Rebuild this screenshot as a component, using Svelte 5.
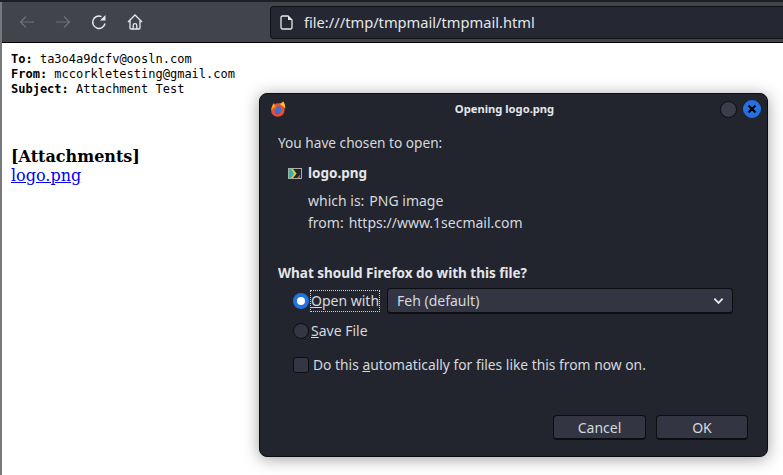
<script>
	let choice = 'open';
	let remember = false;
</script>

<div class="browser">
	<div class="topline"></div>
	<header class="toolbar">
		<div class="navs">
			<button class="nav" aria-label="Back">
				<svg viewBox="0 0 16 16" width="16" height="16"><path d="M15 8H1.500M7 2.500L1.500 8 7 13.500" fill="none" stroke="#6f7178" stroke-width="1.200"/></svg>
			</button>
			<button class="nav" aria-label="Forward">
				<svg viewBox="0 0 16 16" width="16" height="16"><path d="M1 8h13.500M9 2.500L14.500 8 9 13.500" fill="none" stroke="#6f7178" stroke-width="1.200"/></svg>
			</button>
			<button class="nav" aria-label="Reload">
				<svg viewBox="0 0 16 16" width="16" height="16"><path d="M14 9.500A6.200 6.200 0 1 1 10.500 2.600" fill="none" stroke="#e8e9eb" stroke-width="1.400"/><path d="M14.500 1v5.500H9z" fill="#e8e9eb"/></svg>
			</button>
			<button class="nav" aria-label="Home">
				<svg viewBox="0 0 16 16" width="16" height="16"><path d="M1 8l7-7 7 7M3 6v8a1 1 0 0 0 1 1h8a1 1 0 0 0 1-1V6M6.200 15v-3.500a1.800 1.800 0 0 1 3.600 0V15" fill="none" stroke="#e8e9eb" stroke-width="1.300"/></svg>
			</button>
		</div>
		<div class="urlbar">
			<svg viewBox="0 0 13 15" width="13" height="15"><path d="M2.500 1h5.500l4 4v7.500a1.500 1.500 0 0 1-1.500 1.500h-8A1.500 1.500 0 0 1 1 12.500v-10A1.500 1.500 0 0 1 2.500 1z" fill="none" stroke="#e8e9eb" stroke-width="1.300"/><path d="M8 1l4 4H8z" fill="#e8e9eb"/></svg>
			<span>file:///tmp/tmpmail/tmpmail.html</span>
		</div>
	</header>
	<main class="page">
		<pre class="headers"><b>To:</b> ta3o4a9dcfv@oosln.com
<b>From:</b> mccorkletesting@gmail.com
<b>Subject:</b> Attachment Test</pre>
		<div class="attachments">
			<b>[Attachments]</b><br />
			<a href="#logo">logo.png</a>
		</div>
	</main>
</div>

<div class="dialog">
	<div class="titlebar">
		<svg class="fx" viewBox="0 0 16 16" width="16" height="16">
			<circle cx="7.800" cy="9" r="6.800" fill="#ee4f2a"/>
			<path d="M8 2.200c1.500 1.500 5-1 5-2 1.500 1.500 2.600 4.500 2.200 8C14.500 6 11.500 3.500 8 2.200z" fill="#ffc233"/>
			<path d="M1.500 9C1.500 6 2.500 3.500 4 2c0 1.500.8 2.500 2 3z" fill="#ff9a1f"/>
			<path d="M7 5.500c4-1.500 6 4 3 6.500-2 1.200-5 .5-5.500-2z" fill="#3d6fd8"/>
			<path d="M4.500 10c1 2.500 4 3 6 1.800-2 2.500-6 2-6-1.800z" fill="#8a3fb8"/>
		</svg>
		<span class="title">Opening logo.png</span>
		<span class="wbtn"></span>
		<span class="wbtn close">
			<svg viewBox="0 0 10 10" width="10" height="10"><path d="M1.500 1.500l7 7M8.500 1.500l-7 7" stroke="#000" stroke-width="2.200"/></svg>
		</span>
	</div>

	<div class="body">
		<p class="chosen">You have chosen to open:</p>
		<div class="file">
			<svg viewBox="0 0 14 11" width="14" height="11">
				<rect width="14" height="11" fill="#a9adae"/>
				<rect x="1" y="1" width="12" height="9" fill="#20232a"/>
				<path d="M1 1h4l3.500 4.500L5 10H1z" fill="#2fb6b0"/>
				<path d="M3 1h2l3.500 4.500L5 10H3l3-4.500z" fill="#e6c22c"/>
				<path d="M9 10l3-3.500V10z" fill="#cf4a3c"/>
			</svg>
			<b>logo.png</b>
		</div>
		<div class="meta">
			<div class="metarow"><span>which is:</span><span>PNG image</span></div>
			<div class="metarow"><span>from:</span><span>https://www.1secmail.com</span></div>
		</div>

		<p class="question">What should Firefox do with this file?</p>
		<div class="choices">
			<div class="choice">
				<button class="radio" class:on={choice === 'open'} aria-label="Open with" onclick={() => (choice = 'open')}></button>
				<span class="focus"><u>O</u>pen with</span>
				<div class="select">
					<span>Feh (default)</span>
					<svg viewBox="0 0 12 8" width="11" height="8"><path d="M1.500 1.500L6 6l4.500-4.500" fill="none" stroke="#e8e9eb" stroke-width="2"/></svg>
				</div>
			</div>
			<div class="choice save">
				<button class="radio" class:on={choice === 'save'} aria-label="Save File" onclick={() => (choice = 'save')}></button>
				<span class="savelabel"><u>S</u>ave File</span>
			</div>
			<div class="choice auto">
				<button class="check" class:on={remember} aria-label="Remember" onclick={() => (remember = !remember)}></button>
				<span class="autolabel">Do this <u>a</u>utomatically for files like this from now on.</span>
			</div>
		</div>
	</div>

	<div class="actions">
		<button class="btn cancel">Cancel</button>
		<button class="btn ok">OK</button>
	</div>
</div>

<style>
	:global(body) {
		margin: 0;
		background: #fff;
		overflow: hidden;
	}

	.browser {
		height: 475px;
		display: flex;
		flex-direction: column;
		box-sizing: border-box;
		border-left: 2px solid #77787c;
	}

	.topline {
		height: 2px;
		flex: none;
		background: #1d1f25;
		margin-left: -2px;
	}

	.toolbar {
		height: 41px;
		flex: none;
		box-sizing: border-box;
		display: flex;
		align-items: center;
		background: #42444c;
		border-bottom: 1px solid #000;
		padding-left: 17px;
	}

	.navs {
		display: flex;
		gap: 20px;
		width: 251px;
		flex: none;
	}

	.nav {
		width: 16px;
		height: 16px;
		padding: 0;
		border: 0;
		background: none;
		display: block;
	}

	.nav svg {
		display: block;
	}

	.urlbar {
		flex: 1;
		height: 33px;
		box-sizing: border-box;
		display: flex;
		align-items: center;
		gap: 11px;
		padding-left: 9px;
		background: #252833;
		border: 1px solid #111216;
		border-right: 0;
		border-radius: 4px 0 0 4px;
		color: #e4e6ea;
		font: 14.670px "Noto Sans", sans-serif;
	}

	.page {
		flex: 1;
		padding: 9px 0 0 9px;
		background: #fff;
	}

	.headers {
		margin: 0;
		font: 12px/15px "DejaVu Sans Mono", monospace;
		color: #000;
	}

	.attachments {
		margin-top: 50px;
		font: 16px/19px "DejaVu Serif", serif;
		color: #000;
	}

	.attachments a {
		color: #0000ee;
	}

	.dialog {
		position: absolute;
		left: 259px;
		top: 93px;
		width: 509px;
		height: 364px;
		box-sizing: border-box;
		display: flex;
		flex-direction: column;
		background: #23252e;
		border: 1px solid #0c0d10;
		border-radius: 8px;
		box-shadow: 0 2px 16px rgba(0, 0, 0, 0.38);
		color: #d5d8df;
		font: 14px/20px "Noto Sans", sans-serif;
	}

	.titlebar {
		height: 30px;
		flex: none;
		display: flex;
		align-items: center;
		padding: 0 6px 0 10px;
		gap: 6px;
	}

	.fx {
		flex: none;
	}

	.title {
		flex: 1;
		text-align: center;
		font-size: 11.200px;
		font-weight: 700;
		color: #e4e6ea;
		padding-left: 3px;
	}

	.wbtn {
		width: 17px;
		height: 17px;
		box-sizing: border-box;
		border-radius: 50%;
		background: #3b3d4a;
		border: 1px solid #0c0d10;
		display: flex;
		align-items: center;
		justify-content: center;
	}

	.wbtn.close {
		width: 18px;
		height: 18px;
		background: #2272e4;
		border-color: #2272e4;
	}

	.body {
		flex: 1;
		padding: 9px 0 0 18px;
	}

	.chosen {
		margin: 0;
		font-size: 13.670px;
	}

	.file {
		display: flex;
		align-items: center;
		gap: 6px;
		margin: 10px 0 0 10px;
		height: 20px;
	}

	.file b {
		font-weight: 700;
		font-size: 13.500px;
		color: #e4e6ea;
	}

	.meta {
		margin: 7px 0 0 30px;
		line-height: 22px;
	}

	.metarow {
		display: flex;
		gap: 5px;
	}

	.question {
		margin: 29px 0 0;
		font-size: 13.500px;
		font-weight: 700;
		color: #e4e6ea;
	}

	.choices {
		margin-top: 5px;
		padding-left: 15px;
	}

	.choice {
		display: flex;
		align-items: center;
	}

	.radio {
		width: 16px;
		height: 16px;
		flex: none;
		padding: 0;
		border-radius: 50%;
		background: #343644;
		border: 1px solid #0c0d10;
	}

	.radio.on {
		background: #fff;
		border: 4px solid #2272e4;
		box-sizing: border-box;
	}

	.focus {
		border: 1px dotted #cfd2d8;
		height: 20px;
		width: 68px;
		margin-left: 1px;
		line-height: 20px;
		white-space: nowrap;
	}

	.select {
		width: 346px;
		height: 26px;
		box-sizing: border-box;
		margin-left: 7px;
		display: flex;
		align-items: center;
		justify-content: space-between;
		padding: 0 8px 0 9px;
		background: #333642;
		border: 1px solid #0c0d10;
		border-bottom-width: 2px;
		border-radius: 4px;
	}

	.save {
		margin-top: 7px;
	}

	.savelabel {
		margin-left: 2px;
	}

	.auto {
		margin-top: 14px;
	}

	.check {
		width: 16px;
		height: 16px;
		flex: none;
		padding: 0;
		background: #343644;
		border: 1px solid #0c0d10;
		border-radius: 3px;
		margin-right: 4px;
	}

	.autolabel {
		font-size: 13.830px;
	}

	.actions {
		display: flex;
		justify-content: flex-end;
		gap: 10px;
		padding: 0 19px 16px 0;
	}

	.btn {
		height: 25px;
		padding: 0;
		background: #333642;
		border: 1px solid #0c0d10;
		border-bottom-width: 2px;
		border-radius: 4px;
		color: #d5d8df;
		font: 14px "Noto Sans", sans-serif;
	}

	.cancel {
		width: 93px;
	}

	.ok {
		width: 92px;
	}
</style>
